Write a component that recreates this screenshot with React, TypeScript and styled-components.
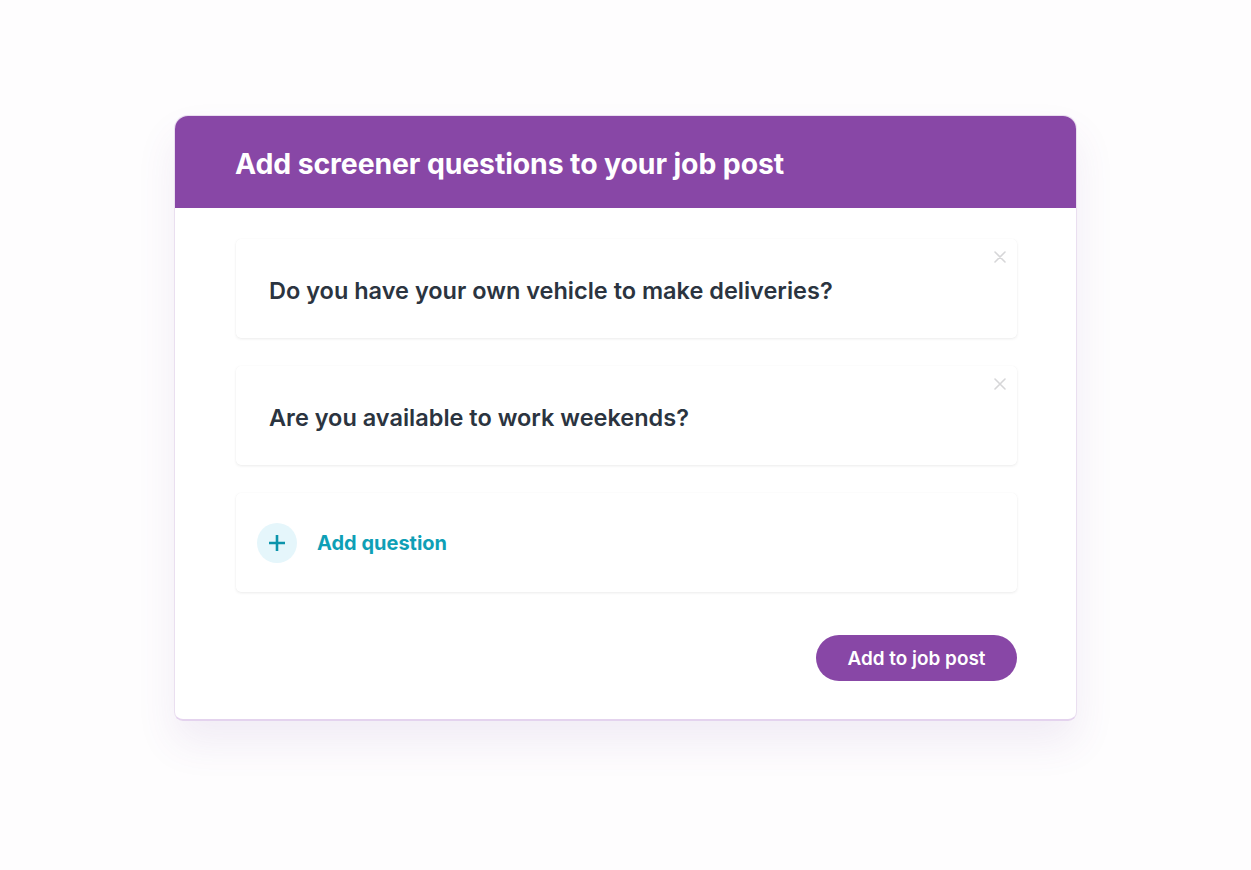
import { FC } from 'react';
import styled, { createGlobalStyle } from 'styled-components';

const GlobalStyle = createGlobalStyle`
  html, body {
    margin: 0;
    padding: 0;
    background: #fefdfe;
    font-family: Inter, "Noto Sans", "Liberation Sans", sans-serif;
  }
`;

const Page = styled.div`
  min-height: 870px;
  display: flex;
  justify-content: center;
  align-items: flex-start;
  padding-top: 115px;
  box-sizing: border-box;
`;

const Modal = styled.div`
  width: 903px;
  background: #fff;
  border: 1px solid #eadff0;
  border-bottom: 2px solid #e4d3ee;
  border-radius: 14px 14px 9px 9px;
  box-shadow: 0 22px 40px rgba(110, 70, 150, 0.09);
  box-sizing: border-box;
  overflow: hidden;
`;

const Header = styled.div`
  height: 93px;
  background: #8847a6;
  display: flex;
  align-items: center;
  padding: 3px 61px 0;
  margin: -1px -1px 0;
  box-sizing: border-box;
`;

const Title = styled.h1`
  margin: 0;
  color: #fff;
  font-size: 28.4px;
  font-weight: 700;
  letter-spacing: -0.1px;
`;

const Body = styled.div`
  padding: 31px 59px 38px 61px;
  display: flex;
  flex-direction: column;
  gap: 28px;
`;

const QuestionCard = styled.div`
  position: relative;
  height: 99px;
  display: flex;
  align-items: center;
  padding: 4px 33px 0;
  box-sizing: border-box;
  background: #fff;
  border-radius: 5px;
  box-shadow: 0 1px 3px rgba(0, 0, 0, 0.08), 0 0 1px rgba(0, 0, 0, 0.04);
  color: #2b3440;
  font-size: 23.5px;
  font-weight: 600;
`;

const CloseBtn = styled.span`
  position: absolute;
  top: 11px;
  right: 10px;
  width: 14px;
  height: 14px;
  display: flex;
  align-items: center;
  justify-content: center;
`;

const AddCard = styled(QuestionCard)`
  padding: 0 21px;
  gap: 20px;
  color: #0f9fb6;
  font-size: 20px;
  font-weight: 700;
  cursor: pointer;
`;

const PlusCircle = styled.span`
  width: 40px;
  height: 40px;
  border-radius: 50%;
  background: #e5f6fb;
  display: flex;
  align-items: center;
  justify-content: center;
`;

const Footer = styled.div`
  display: flex;
  justify-content: flex-end;
  margin-top: 15px;
`;

const PrimaryButton = styled.button`
  width: 201px;
  height: 46px;
  border: none;
  border-radius: 23px;
  background: #8847a6;
  color: #fff;
  font-family: inherit;
  font-size: 18.9px;
  font-weight: 600;
  cursor: pointer;
`;

const Close: FC = () => (
  <CloseBtn>
    <svg width="12" height="12" viewBox="0 0 12 12">
      <path d="M1 1L11 11M11 1L1 11" stroke="#d6d6d8" strokeWidth="1.6" strokeLinecap="round" />
    </svg>
  </CloseBtn>
);

const questions = ['Do you have your own vehicle to make deliveries?', 'Are you available to work weekends?'];

export default function App() {
  return (
    <>
      <GlobalStyle />
      <Page>
        <Modal>
          <Header>
            <Title>Add screener questions to your job post</Title>
          </Header>
          <Body>
            {questions.map((q) => (
              <QuestionCard key={q}>
                {q}
                <Close />
              </QuestionCard>
            ))}
            <AddCard>
              <PlusCircle>
                <svg width="20" height="20" viewBox="0 0 20 20">
                  <path d="M10 2V18M2 10H18" stroke="#0b94ab" strokeWidth="2.6" />
                </svg>
              </PlusCircle>
              Add question
            </AddCard>
            <Footer>
              <PrimaryButton>Add to job post</PrimaryButton>
            </Footer>
          </Body>
        </Modal>
      </Page>
    </>
  );
}
